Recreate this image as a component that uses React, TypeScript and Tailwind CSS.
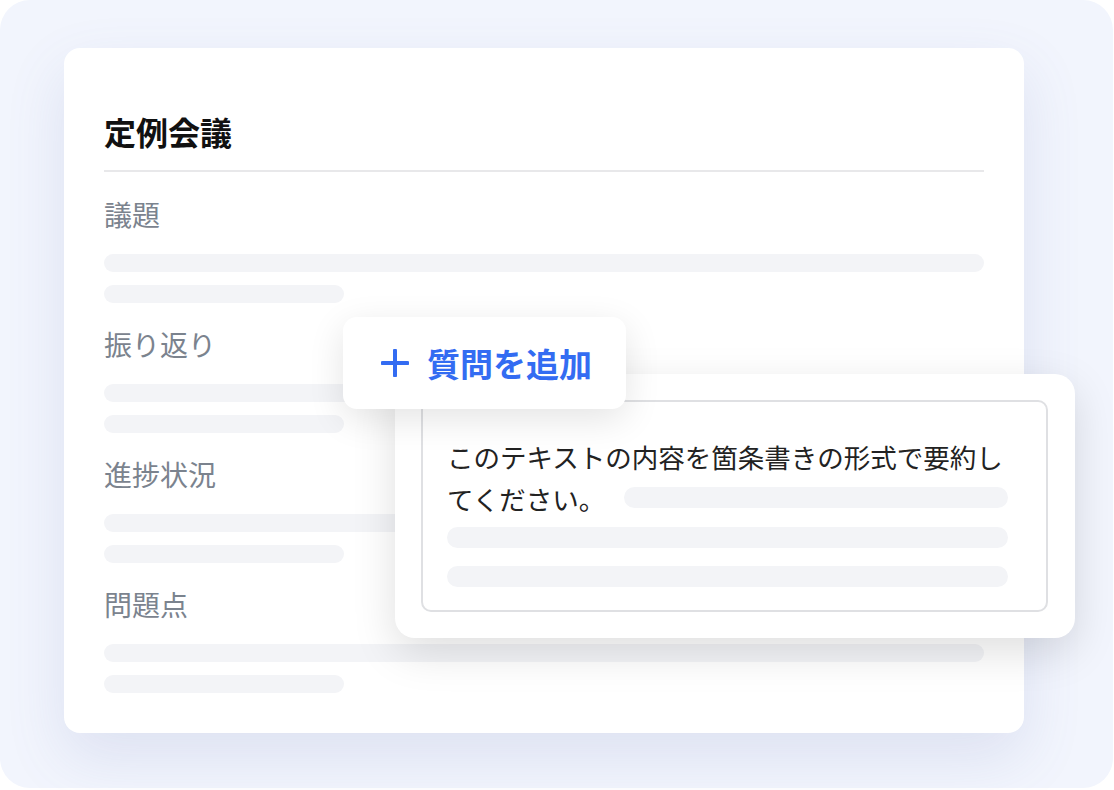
import React from "react";

const sections = ["議題", "振り返り", "進捗状況", "問題点"];

const Bar = ({ className = "" }: { className?: string }) => (
  <div className={`rounded-full bg-[#f3f4f7] ${className}`} />
);

export default function App() {
  return (
    <div
      className="w-[1114px] h-[790px] bg-white"
      style={{ fontFamily: '"Noto Sans CJK JP", "Noto Sans", sans-serif' }}
    >
      <div className="w-[1113px] h-[788px] rounded-[30px] bg-[#f2f5fd] pt-[48px] pl-[64px]">
        <div className="relative w-[960px] h-[685px] rounded-[16px] bg-white px-[40px] pt-[63px] shadow-[0_24px_60px_rgba(90,105,170,0.14)]">
          <h1 className="text-[32px] leading-[40px] font-bold text-[#111]">定例会議</h1>
          <div className="mt-[19px] h-[2px] bg-[#e8e8ea]" />

          <div className="flex flex-col gap-[23px] pt-[24px]">
            {sections.map((s) => (
              <div key={s} className="flex flex-col">
                <div className="text-[28px] leading-[36px] text-[#7b838e]">{s}</div>
                <Bar className="mt-[22px] h-[18px]" />
                <Bar className="mt-[13px] h-[18px] w-[240px]" />
              </div>
            ))}
          </div>

          {/* prompt card */}
          <div className="absolute left-[331px] top-[326px] w-[680px] h-[264px] rounded-[20px] bg-white p-[26px] pr-[27px] shadow-[0_14px_44px_rgba(0,0,0,0.13)]">
            <div className="h-full rounded-[10px] border-2 border-[#dfe0e3] pl-[24px] pr-[38px] pt-[34px]">
              <div className="text-[26.5px] leading-[42px] text-[#222] whitespace-nowrap">
                このテキストの内容を箇条書きの形式で要約し
              </div>
              <div className="flex items-center">
                <span className="text-[26.5px] leading-[42px] text-[#222] whitespace-nowrap">
                  てください。
                </span>
                <Bar className="ml-[19px] flex-1 h-[21px] -mt-[4px]" />
              </div>
              <Bar className="mt-[7px] h-[21px]" />
              <Bar className="mt-[18px] h-[21px]" />
            </div>
          </div>

          {/* add question button */}
          <div className="absolute left-[279px] top-[269px] w-[283px] h-[92px] rounded-[14px] bg-white flex items-center pl-[38px] shadow-[0_10px_36px_rgba(0,0,0,0.11)]">
            <svg width="28" height="28" viewBox="0 0 28 28" className="shrink-0">
              <path d="M14 1.5v25M1.5 14h25" stroke="#336cf2" strokeWidth="4" strokeLinecap="round" />
            </svg>
            <span className="ml-[18px] text-[33px] leading-[40px] font-bold text-[#336cf2]">
              質問を追加
            </span>
          </div>
        </div>
      </div>
    </div>
  );
}
